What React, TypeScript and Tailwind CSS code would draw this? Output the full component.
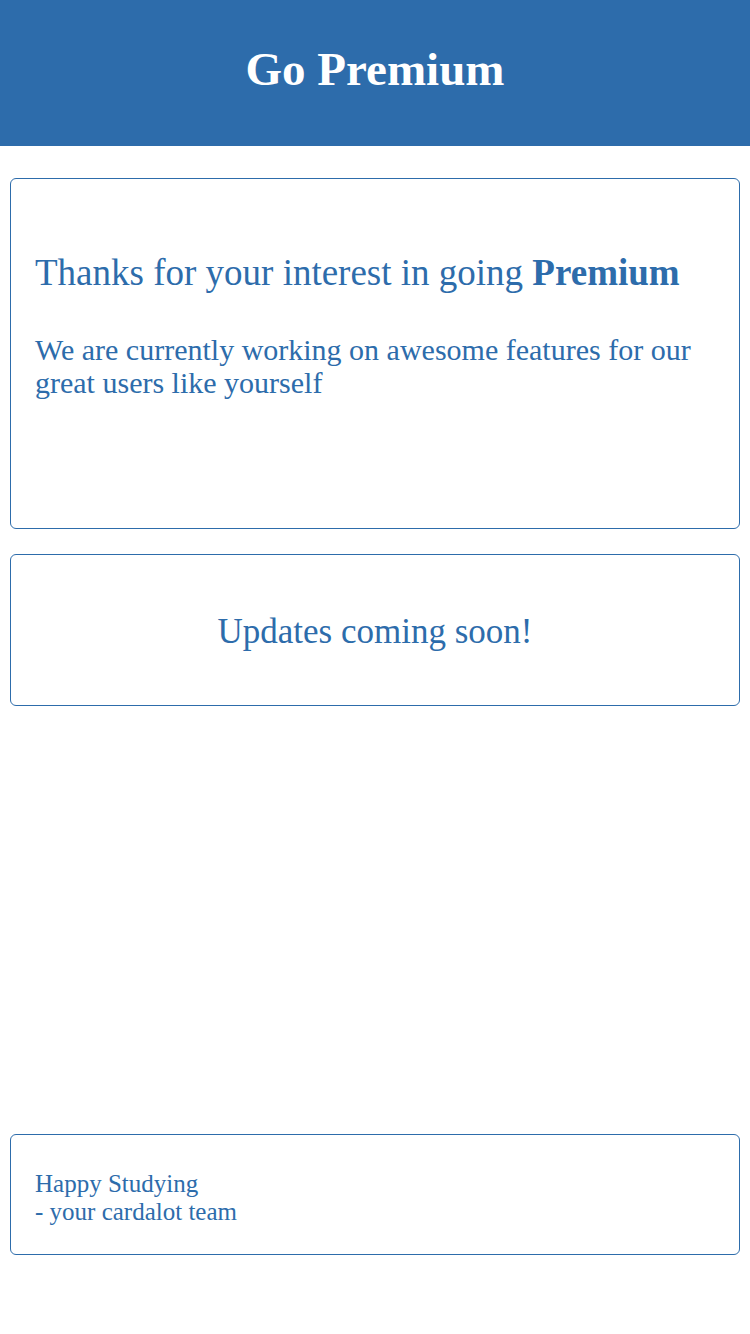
export default function App() {
  return (
    <div className="min-h-[1334px] flex flex-col bg-white text-[#2d6cab] font-['Liberation_Serif',serif]">
      <header className="h-[146px] bg-[#2d6cab] flex items-center justify-center pb-[8px]">
        <h1 className="text-white text-[47px] font-bold leading-none">Go Premium</h1>
      </header>

      <main className="flex-1 flex flex-col px-[10px] pt-[32px] pb-[79px]">
        <section className="h-[351px] border border-[#2d6cab] rounded-[6px] px-[24px] pt-[72px]">
          <h2 className="text-[37px] leading-[44px]">
            Thanks for your interest in going <span className="font-bold">Premium</span>
          </h2>
          <p className="mt-[38px] text-[30px] leading-[33px]">
            We are currently working on awesome features for our great users like yourself
          </p>
        </section>

        <section className="mt-[25px] h-[152px] border border-[#2d6cab] rounded-[6px] flex items-center justify-center pt-[2px]">
          <p className="text-[35px] leading-none">Updates coming soon!</p>
        </section>

        <div className="flex-1" />

        <section className="h-[121px] border border-[#2d6cab] rounded-[6px] px-[24px] pt-[6px] flex flex-col justify-center">
          <p className="text-[25px] leading-[28px]">Happy Studying</p>
          <p className="text-[25px] leading-[28px]">- your cardalot team</p>
        </section>
      </main>
    </div>
  )
}
